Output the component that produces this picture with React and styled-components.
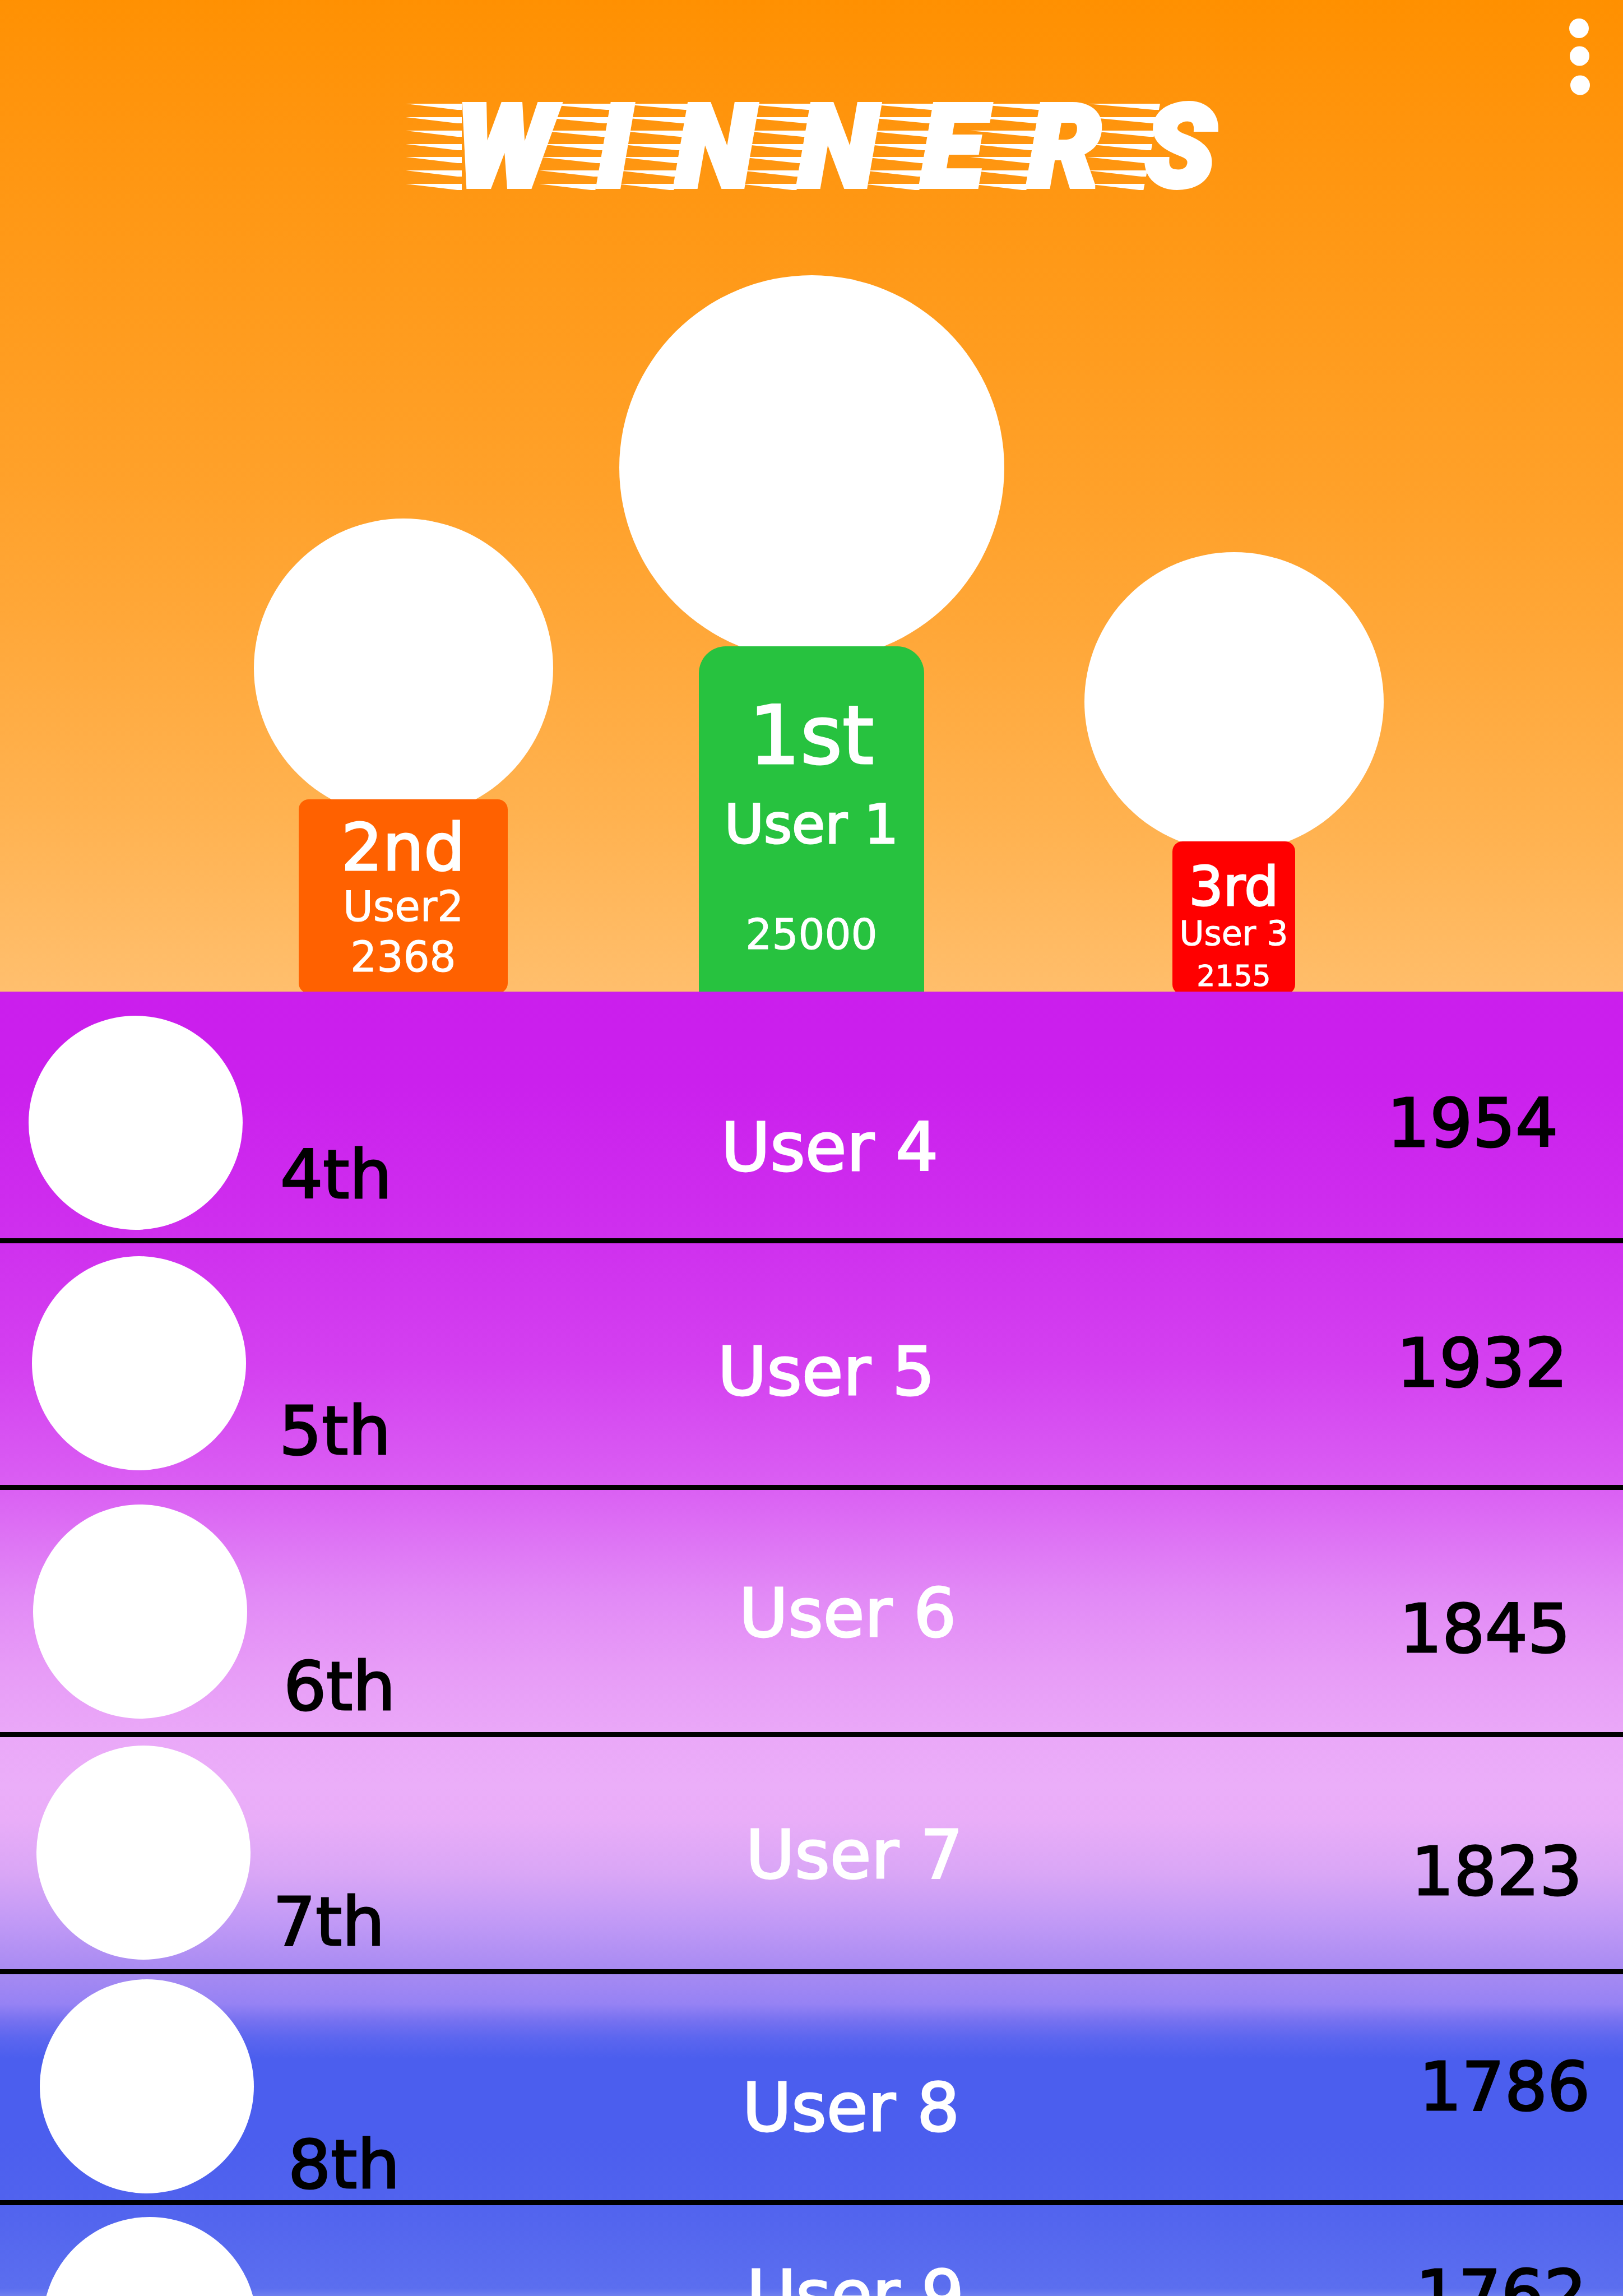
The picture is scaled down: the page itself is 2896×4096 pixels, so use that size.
import React from 'react';
import styled, { createGlobalStyle } from 'styled-components';

const GlobalStyle = createGlobalStyle`
  *, *::before, *::after { box-sizing: border-box; }
  body {
    margin: 0;
    font-family: "DejaVu Sans", Verdana, sans-serif;
  }
`;

const Page = styled.main`
  display: flex;
  flex-direction: column;
  height: 100vh;
  overflow: hidden;
`;

const Hero = styled.header`
  flex: none;
  display: flex;
  flex-direction: column;
  color: #fff;
  background: linear-gradient(
    181deg,
    #ff9000 0%,
    #ff940c 12%,
    #ffa12a 50%,
    #ffa738 63%,
    #ffb250 82%,
    #ffbf6e 100%
  );
`;

const MenuButton = styled.button`
  align-self: flex-end;
  margin: 33px 58px 0 0;
  padding: 0;
  border: 0;
  background: none;
  line-height: 0;
  cursor: pointer;
`;

const Title = styled.h1`
  display: flex;
  justify-content: center;
  margin: 15px 0 0;
  padding-left: 20px;
  font-family: Roboto, "Open Sans", sans-serif;
  font-size: 204px;
  font-weight: 900;
  font-style: italic;
  line-height: 156px;
  -webkit-text-stroke: 10px #fff;
`;

const Letter = styled.span`
  display: flex;
`;

const StreakDrawing = styled.svg`
  flex: none;
  width: 104px;
  height: 156px;
  margin-left: -24px;
  margin-right: ${(p) => (p.$tight ? '-14px' : '0')};
  overflow: visible;
`;

const Stage = styled.section`
  display: grid;
  grid-template-columns: 1fr 687px 1fr;
  align-items: end;
  margin-top: 150px;
`;

const Contender = styled.article`
  display: flex;
  flex-direction: column;
  align-items: center;
  justify-self: ${(p) => p.$side};
  margin: ${(p) => p.$margin};
`;

const Portrait = styled.div`
  flex: none;
  width: ${(p) => p.$size}px;
  height: ${(p) => p.$size}px;
  border-radius: 50%;
  background: #fff;
`;

const Block = styled.div`
  position: relative;
  display: flex;
  flex-direction: column;
  align-items: center;
  width: ${(p) => p.$width}px;
  height: ${(p) => p.$height}px;
  margin-top: -${(p) => p.$overlap}px;
  padding-top: ${(p) => p.$pad}px;
  border-radius: ${(p) => p.$radius};
  background: ${(p) => p.$color};
`;

const BlockLine = styled.p`
  margin: ${(p) => p.$gap || 0}px 0 0;
  font-size: ${(p) => p.$size}px;
  line-height: ${(p) => p.$size}px;
  white-space: nowrap;
  -webkit-text-stroke: ${(p) => (p.$size > 90 ? 3 : 1)}px #fff;
`;

const Ranking = styled.ol`
  position: relative;
  flex: 1;
  min-height: 0;
  margin: 0;
  padding: 0;
  list-style: none;
  overflow-y: auto;
  scrollbar-width: none;
  font-size: 120px;
  line-height: 120px;
  background: linear-gradient(
    180deg,
    #cb1eed 0%,
    #cb20ed 7%,
    #cf30ee 19%,
    #d440f0 28.6%,
    #da5ff3 38%,
    #e28af6 46.4%,
    #e79bf7 51.7%,
    #eaa8f8 57%,
    #ebaef9 61%,
    #e9adf8 63.5%,
    #d9a6f6 67.7%,
    #c29af6 71.2%,
    #a88bf2 75%,
    #9682f4 77.6%,
    #7671f0 78.9%,
    #5c66ef 80.2%,
    #4b5eee 81.8%,
    #4b5eee 88%,
    #5163ee 92.9%,
    #5b6eef 99.4%,
    #6e7fef 100%
  );
`;

const Row = styled.li`
  display: grid;
  grid-template-columns: 480px 2fr 3fr 430px;
  align-items: start;
  height: ${(p) => p.$height}px;
  border-bottom: 9px solid #000;
  overflow: hidden;
`;

const Cell = styled.div`
  padding: ${(p) => p.$at[1]}px 0 0 ${(p) => p.$at[0]}px;
  color: ${(p) => (p.$light ? '#fff' : '#000')};
  white-space: nowrap;
  -webkit-text-stroke: 3px currentColor;
`;

const contenders = [
  {
    rank: '2nd', name: 'User2', score: '2368',
    side: 'end', margin: '0 118px -3px 0', portrait: 534,
    block: { width: 373, height: 346, overlap: 33, pad: 28, radius: '18px', color: '#ff6100' },
    sizes: [116, 74, 74], gaps: [10, 16],
  },
  {
    rank: '1st', name: 'User 1', score: '25000',
    side: 'center', margin: '0', portrait: 687,
    block: { width: 402, height: 616, overlap: 25, pad: 87, radius: '48px 48px 0 0', color: '#27c23f' },
    sizes: [144, 96, 74], gaps: [39, 111],
  },
  {
    rank: '3rd', name: 'User 3', score: '2155',
    side: 'start', margin: '0 0 -5px 143px', portrait: 534,
    block: { width: 219, height: 273, overlap: 18, pad: 33, radius: '18px', color: '#ff0000' },
    sizes: [96, 60, 52], gaps: [5, 20],
  },
];

const players = [
  { rank: '4th', name: 'User 4', score: '1954', height: 449, avatar: [51, 43], rankAt: [20, 267], nameAt: [12, 218], scoreAt: [9, 175] },
  { rank: '5th', name: 'User 5', score: '1932', height: 440, avatar: [57, 23], rankAt: [18, 275], nameAt: [6, 169], scoreAt: [26, 154] },
  { rank: '6th', name: 'User 6', score: '1845', height: 441, avatar: [59, 26], rankAt: [26, 291], nameAt: [44, 160], scoreAt: [31, 188] },
  { rank: '7th', name: 'User 7', score: '1823', height: 423, avatar: [65, 15], rankAt: [7, 270], nameAt: [56, 150], scoreAt: [52, 180] },
  { rank: '8th', name: 'User 8', score: '1786', height: 412, avatar: [71, 9], rankAt: [34, 280], nameAt: [50, 178], scoreAt: [66, 141] },
  { rank: '', name: 'User 9', score: '1762', height: 412, avatar: [76, 21], rankAt: [34, 280], nameAt: [58, 100], scoreAt: [60, 100] },
];

/* Seven wind streaks that end on the left edge of the letter they trail. */
function Streaks({ lean, tight }) {
  const edge = (y) => 100 + (lean * (156 - y)) / 156;
  return (
    <StreakDrawing viewBox="0 0 104 156" fill="#fff" aria-hidden="true" $tight={tight}>
      {[0, 24, 48, 72, 95, 119, 143].map((y) => (
        <polygon
          key={y}
          points={`0,${y} ${edge(y)},${y} ${edge(y + 11)},${y + 11} ${edge(y + 11) - 8},${y + 11}`}
        />
      ))}
    </StreakDrawing>
  );
}

export default function App() {
  return (
    <>
      <GlobalStyle />
      <Page>
        <Hero>
          <MenuButton type="button" aria-label="Menu">
            <svg width="38" height="137" viewBox="0 0 38 137" fill="#fff">
              <circle cx="17.5" cy="17.5" r="17.5" />
              <circle cx="18.5" cy="67" r="17.5" />
              <circle cx="19.5" cy="119" r="17.5" />
            </svg>
          </MenuButton>
          <Title>
            {'WINNERS'.split('').map((letter, i) => (
              <Letter key={i}>
                <Streaks lean={letter === 'W' ? 0 : 30} tight={letter === 'W'} />
                {letter}
              </Letter>
            ))}
          </Title>
          <Stage>
            {contenders.map((c) => (
              <Contender key={c.rank} $side={c.side} $margin={c.margin}>
                <Portrait $size={c.portrait} />
                <Block
                  $width={c.block.width}
                  $height={c.block.height}
                  $overlap={c.block.overlap}
                  $pad={c.block.pad}
                  $radius={c.block.radius}
                  $color={c.block.color}
                >
                  <BlockLine $size={c.sizes[0]}>{c.rank}</BlockLine>
                  <BlockLine $size={c.sizes[1]} $gap={c.gaps[0]}>{c.name}</BlockLine>
                  <BlockLine $size={c.sizes[2]} $gap={c.gaps[1]}>{c.score}</BlockLine>
                </Block>
              </Contender>
            ))}
          </Stage>
        </Hero>
        <Ranking>
          {players.map((p) => (
            <Row key={p.name} $height={p.height}>
              <Cell $at={p.avatar}>
                <Portrait $size={382} />
              </Cell>
              <Cell $at={p.rankAt}>{p.rank}</Cell>
              <Cell $at={p.nameAt} $light>{p.name}</Cell>
              <Cell $at={p.scoreAt}>{p.score}</Cell>
            </Row>
          ))}
        </Ranking>
      </Page>
    </>
  );
}
